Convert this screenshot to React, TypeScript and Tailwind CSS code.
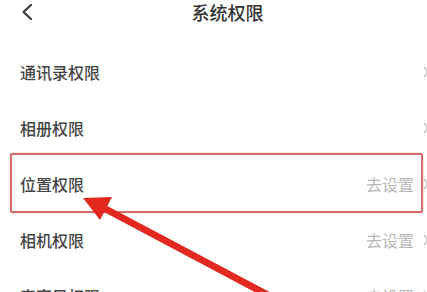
import React from "react";

const rows = [
  { label: "通讯录权限", action: false },
  { label: "相册权限", action: false },
  { label: "位置权限", action: true },
  { label: "相机权限", action: true },
  { label: "麦克风权限", action: true },
];

export default function App() {
  return (
    <div
      className="relative w-[427px] h-[292px] overflow-hidden bg-white"
      style={{ fontFamily: '"Noto Sans CJK SC", "Noto Sans", sans-serif' }}
    >
      <div className="relative h-[44px]">
        <div className="flex h-[23px] items-center">
          <svg width="14" height="18" viewBox="0 0 14 18" className="ml-[20px]">
            <path d="M11 2 L3.5 9 L11 16" fill="none" stroke="#3a3a3a" strokeWidth="2.2" strokeLinecap="round" strokeLinejoin="round" />
          </svg>
          <div className="flex-1 text-center text-[18px] leading-[18px] font-medium text-[#333] pr-[6px]">系统权限</div>
        </div>
      </div>
      {rows.map((r) => (
        <div key={r.label} className="flex h-[56px] items-center">
          <div className="pl-[20px] text-[16px] font-medium text-[#454545]">{r.label}</div>
          <div className="flex-1" />
          {r.action && <div className="text-[16px] text-[#b8b8b8] mr-[8px]">去设置</div>}
          <svg width="8" height="14" viewBox="0 0 8 14" className="mr-[-3px]">
            <path d="M2 2 L6 7 L2 12" fill="none" stroke="#c4c4c4" strokeWidth="1.6" />
          </svg>
        </div>
      ))}
      <div className="absolute left-[10px] top-[153px] w-[413px] h-[60px] border-2 border-[#d96a6a] rounded-[2px] shadow-[0_0_2px_rgba(217,80,80,0.4)]" />
      <svg className="absolute left-0 top-0" width="427" height="292" viewBox="0 0 427 292">
        <line x1="100" y1="206" x2="281" y2="302" stroke="#e3281f" strokeWidth="7" />
        <polygon points="83,198 112,197 100,220" fill="#e3281f" />
      </svg>
    </div>
  );
}
